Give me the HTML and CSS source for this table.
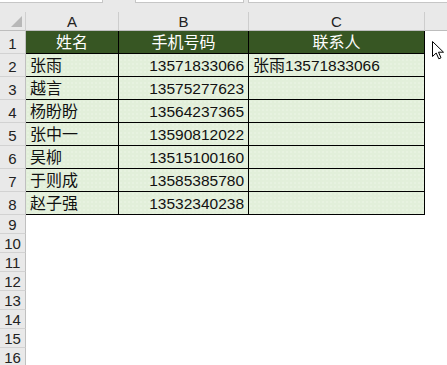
FILE: index.html
```html
<!DOCTYPE html>
<html>
<head>
<meta charset="utf-8">
<link rel="stylesheet" href="styles.css">
</head>
<body>
<div class="app">
  <div class="toolbar">
    <div class="box box1"></div>
    <div class="box box2"></div>
    <div class="box box3"></div>
  </div>
  <div class="sheet">
    <div class="corner"><svg class="tri" width="11" height="11" viewBox="0 0 11 11"><polygon points="11,0 11,11 0,11" fill="#b8b8b8"/></svg></div>
    <div class="colhead">A</div>
    <div class="colhead">B</div>
    <div class="colhead">C</div>
    <div class="colhead rest"></div>

    <div class="rowhead big">1</div>
    <div class="cell hd">姓名</div>
    <div class="cell hd">手机号码</div>
    <div class="cell hd">联系人</div>
    <div class="blank"></div>

    <div class="rowhead big">2</div>
    <div class="cell name">张雨</div>
    <div class="cell num">13571833066</div>
    <div class="cell mix"><span class="cn">张雨</span>13571833066</div>
    <div class="blank"></div>

    <div class="rowhead big">3</div>
    <div class="cell name">越言</div>
    <div class="cell num">13575277623</div>
    <div class="cell mix"></div>
    <div class="blank"></div>

    <div class="rowhead big">4</div>
    <div class="cell name">杨盼盼</div>
    <div class="cell num">13564237365</div>
    <div class="cell mix"></div>
    <div class="blank"></div>

    <div class="rowhead big">5</div>
    <div class="cell name">张中一</div>
    <div class="cell num">13590812022</div>
    <div class="cell mix"></div>
    <div class="blank"></div>

    <div class="rowhead big">6</div>
    <div class="cell name">吴柳</div>
    <div class="cell num">13515100160</div>
    <div class="cell mix"></div>
    <div class="blank"></div>

    <div class="rowhead big">7</div>
    <div class="cell name">于则成</div>
    <div class="cell num">13585385780</div>
    <div class="cell mix"></div>
    <div class="blank"></div>

    <div class="rowhead big">8</div>
    <div class="cell name">赵子强</div>
    <div class="cell num">13532340238</div>
    <div class="cell mix"></div>
    <div class="blank"></div>

    <div class="rowhead">9</div><div class="empty"></div>
    <div class="rowhead">10</div><div class="empty"></div>
    <div class="rowhead">11</div><div class="empty"></div>
    <div class="rowhead">12</div><div class="empty"></div>
    <div class="rowhead">13</div><div class="empty"></div>
    <div class="rowhead">14</div><div class="empty"></div>
    <div class="rowhead">15</div><div class="empty"></div>
    <div class="rowhead">16</div><div class="empty"></div>
  </div>
  <svg class="cursor" width="13" height="19" viewBox="0 0 13 19">
    <path d="M0.5,0.5 L0.5,15.5 L4.2,12 L6.8,17.8 L9,16.8 L6.5,11.2 L11.5,11.2 Z" fill="#fff" stroke="#000" stroke-width="1" stroke-linejoin="miter"/>
  </svg>
</div>
</body>
</html>
```

FILE: styles.css
```css
html, body {
  margin: 0;
  padding: 0;
  background: #ffffff;
}
.app {
  position: relative;
  width: 447px;
  height: 365px;
  overflow: hidden;
  font-family: "Liberation Sans", "Noto Sans CJK SC", sans-serif;
}
.toolbar {
  height: 12px;
  background: #e9e9e9;
  display: flex;
  align-items: flex-start;
}
.box {
  height: 2px;
  background: #ffffff;
  border: 1px solid #c6c6c6;
  border-top: none;
}
.box1 { width: 102px; margin-left: -1px; }
.box2 { width: 107px; margin-left: 32px; }
.box3 { flex: 1; margin-left: 4px; margin-right: -1px; }

.sheet {
  display: grid;
  grid-template-columns: 26px 93px 130px 176px 22px;
  grid-template-rows: 19px repeat(8, 23px) repeat(8, 19px);
}
.corner {
  background: #e9e9e9;
  border-right: 1px solid #d0d0d0;
  border-bottom: 1px solid #bdbdbd;
  box-sizing: border-box;
  display: flex;
  align-items: flex-end;
  justify-content: flex-end;
  padding: 0 3px 3px 0;
}
.colhead {
  background: #e9e9e9;
  border-right: 1px solid #cdcdcd;
  border-bottom: 1px solid #bdbdbd;
  box-sizing: border-box;
  display: flex;
  align-items: center;
  justify-content: center;
  font-size: 15px;
  color: #222222;
  padding-top: 1px;
}
.colhead.rest { border-right: none; }
.rowhead {
  background: #e9e9e9;
  border-right: 1px solid #c0c0c0;
  border-bottom: 1px solid #d2d2d2;
  box-sizing: border-box;
  display: flex;
  align-items: flex-end;
  justify-content: center;
  font-size: 15px;
  color: #222222;
  line-height: 17px;
}
.rowhead.big { padding-bottom: 1px; }
.cell {
  box-sizing: border-box;
  border-right: 1px solid #000000;
  border-bottom: 1px solid #000000;
  background-color: #e2efda;
  background-image: radial-gradient(circle, rgba(255,255,255,0.25) 0.6px, transparent 0.9px);
  background-size: 4px 4px;
  color: #111111;
  white-space: nowrap;
  font-size: 15.5px;
  line-height: 23px;
}
.cell.hd {
  background: #375623;
  color: #ffffff;
  text-align: center;
  font-size: 16px;
}
.cell.name {
  padding-left: 4px;
  font-size: 16px;
}
.cell.num {
  text-align: right;
  padding-right: 4px;
}
.cell.mix {
  padding-left: 4px;
}
.cn {
  font-size: 16px;
}
.blank {
  background: #ffffff;
}
.empty {
  grid-column: 2 / 6;
  background: #ffffff;
}
.cursor {
  position: absolute;
  left: 432px;
  top: 41px;
}
```
